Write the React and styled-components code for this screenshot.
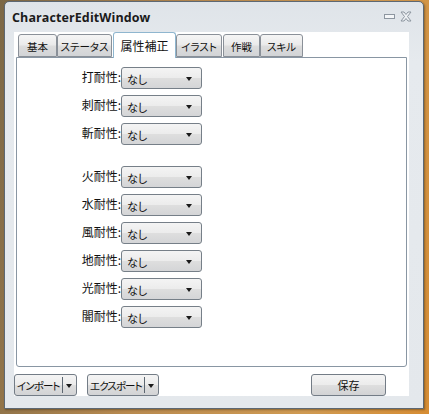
import React from 'react'
import styled, { createGlobalStyle } from 'styled-components'

const GlobalStyle = createGlobalStyle`
  body {
    margin: 0;
    background: linear-gradient(100deg, #7c6846 0%, #b88a4f 40%, #cf9a52 75%, #d68d34 100%);
    font-family: "Noto Sans CJK JP", "Noto Sans", sans-serif;
  }
`

const jp = `"Noto Sans CJK JP", "Noto Sans", sans-serif`

const Desktop = styled.div`
  width: 429px;
  height: 414px;
  padding: 1px 0 0 4px;
  box-sizing: border-box;
`

const Window = styled.div`
  width: 420px;
  height: 408px;
  box-sizing: border-box;
  border: 1px solid #5d6873;
  border-radius: 5px 5px 0 0;
  background: linear-gradient(#dfe4e9, #e6eaee 60px, #e4e8ec);
  box-shadow: 1px 1px 2px rgba(60, 40, 10, 0.45);
  display: flex;
  flex-direction: column;
`

const TitleBar = styled.div`
  height: 30px;
  display: flex;
  align-items: center;
  padding-left: 7px;
  padding-right: 11px;
  h1 {
    margin: 0;
    font-family: "Open Sans", "DejaVu Sans", sans-serif;
    font-weight: 700;
    font-size: 12.5px;
    color: #1b1b1b;
    flex-grow: 1;
    letter-spacing: 0.1px;
  }
  .controls {
    display: flex;
    align-items: center;
    gap: 5px;
    margin-top: -2px;
  }
`

const Client = styled.div`
  margin: 0 14px 0 9px;
  height: 364px;
  background: #ffffff;
  display: flex;
  flex-direction: column;
`

const TabStrip = styled.div`
  height: 25px;
  display: flex;
  align-items: flex-end;
  padding-left: 4px;
  position: relative;
  z-index: 1;
`

const Tab = styled.div`
  width: ${p => p.w}px;
  margin-left: ${p => p.ml || 0}px;
  height: ${p => (p.active ? 26 : 23)}px;
  margin-bottom: ${p => (p.active ? -1 : 0)}px;
  box-sizing: border-box;
  border: 1px solid ${p => (p.active ? '#8fb6cf' : '#8a9098')};
  border-bottom: ${p => (p.active ? 'none' : '1px solid #8a9098')};
  border-radius: 3px 3px 0 0;
  background: ${p => (p.active
    ? '#ffffff'
    : 'linear-gradient(#f5f5f5, #ebebeb 45%, #dcdcdc 55%, #d2d4d7)')};
  display: flex;
  align-items: center;
  justify-content: center;
  padding-top: ${p => (p.active ? 0 : 1)}px;
  font-family: ${jp};
  font-feature-settings: "palt";
  font-size: ${p => (p.active ? 12 : 10.5)}px;
  white-space: nowrap;
  color: #111;
`

const Panel = styled.div`
  margin: 0 2px;
  height: 310px;
  box-sizing: border-box;
  border: 1px solid #8996a3;
  border-radius: 0 0 3px 3px;
  padding-top: 9px;
  display: flex;
  flex-direction: column;
`

const Group = styled.div`
  display: flex;
  flex-direction: column;
  gap: 6px;
  & + & {
    margin-top: 21px;
  }
`

const Row = styled.div`
  display: flex;
  align-items: center;
  height: 22px;
  label {
    width: 104px;
    text-align: right;
    font-family: ${jp};
    font-feature-settings: "palt";
    font-size: 12px;
    color: #111;
    margin-top: -3px;
  }
`

const Combo = styled.div`
  width: 81px;
  height: 22px;
  box-sizing: border-box;
  border: 1px solid #767f88;
  border-radius: 3px;
  background: linear-gradient(#f4f4f4, #ececec 48%, #dedede 52%, #d4d5d7);
  display: flex;
  align-items: center;
  padding: 0 9px 0 5px;
  font-family: ${jp};
  font-feature-settings: "palt";
  font-size: 11px;
  color: #111;
  span {
    flex-grow: 1;
    padding-top: 2px;
  }
`

const Arrow = styled.i`
  flex-shrink: 0;
  width: 0;
  height: 0;
  border-left: 3.5px solid transparent;
  border-right: 3.5px solid transparent;
  border-top: 4px solid #1a1a1a;
  margin-top: 1px;
`

const ButtonRow = styled.div`
  display: flex;
  align-items: center;
  margin-top: 7px;
`

const Button = styled.div`
  width: ${p => p.w}px;
  margin-left: ${p => p.ml || 0}px;
  margin-right: ${p => p.mr || 0}px;
  height: 22px;
  box-sizing: border-box;
  border: 1px solid #737c86;
  border-radius: 3px;
  background: linear-gradient(#f4f4f4, #ececec 48%, #dedede 52%, #d2d3d5);
  display: flex;
  align-items: center;
  justify-content: ${p => (p.split ? 'flex-start' : 'center')};
  padding-left: ${p => (p.split ? 2 : 0)}px;
  font-family: ${jp};
  font-feature-settings: "palt";
  font-size: 11px;
  white-space: nowrap;
  color: #111;
  .label {
    padding-top: 1px;
    font-size: 10.5px;
    letter-spacing: -0.9px;
  }
  .divider {
    flex-shrink: 0;
    width: 1px;
    height: 16px;
    background: #5c6670;
    margin: 0 3px 0 auto;
  }
  ${Arrow} {
    margin-right: 4px;
  }
`

const Spacer = styled.div`
  flex-grow: 1;
`

const resistGroups = [
  ['打耐性', '刺耐性', '斬耐性'],
  ['火耐性', '水耐性', '風耐性', '地耐性', '光耐性', '闇耐性'],
]

const tabs = [
  { label: '基本', w: 39 },
  { label: 'ステータス', w: 55 },
  { label: '属性補正', w: 63, ml: 1, active: true },
  { label: 'イラスト', w: 46 },
  { label: '作戦', w: 37, ml: 1 },
  { label: 'スキル', w: 43 },
]

function WindowControls() {
  return (
    <div className="controls">
      <svg width="11" height="8" viewBox="0 0 11 8">
        <rect x="0.5" y="2.5" width="10" height="4" fill="#f4f6f8" stroke="#8d96a0" />
      </svg>
      <svg width="12" height="11" viewBox="0 0 12 11">
        <path
          d="M1 1 L4 1 L6 3.5 L8 1 L11 1 L7.5 5.5 L11 10 L8 10 L6 7.5 L4 10 L1 10 L4.5 5.5 Z"
          fill="#eef1f4"
          stroke="#8d96a0"
          strokeWidth="1"
          strokeLinejoin="round"
        />
      </svg>
    </div>
  )
}

export default function App() {
  return (
    <Desktop>
      <GlobalStyle />
      <Window>
        <TitleBar>
          <h1>CharacterEditWindow</h1>
          <WindowControls />
        </TitleBar>
        <Client>
          <TabStrip>
            {tabs.map(t => (
              <Tab key={t.label} w={t.w} ml={t.ml} active={t.active}>{t.label}</Tab>
            ))}
          </TabStrip>
          <Panel>
            {resistGroups.map((group, i) => (
              <Group key={i}>
                {group.map(name => (
                  <Row key={name}>
                    <label>{name}:</label>
                    <Combo>
                      <span>なし</span>
                      <Arrow />
                    </Combo>
                  </Row>
                ))}
              </Group>
            ))}
          </Panel>
          <ButtonRow>
            <Button w={63} split>
              <span className="label">インポート</span>
              <span className="divider" />
              <Arrow />
            </Button>
            <Button w={72} ml={10} split>
              <span className="label">エクスポート</span>
              <span className="divider" />
              <Arrow />
            </Button>
            <Spacer />
            <Button w={75} mr={23}>保存</Button>
          </ButtonRow>
        </Client>
      </Window>
    </Desktop>
  )
}
